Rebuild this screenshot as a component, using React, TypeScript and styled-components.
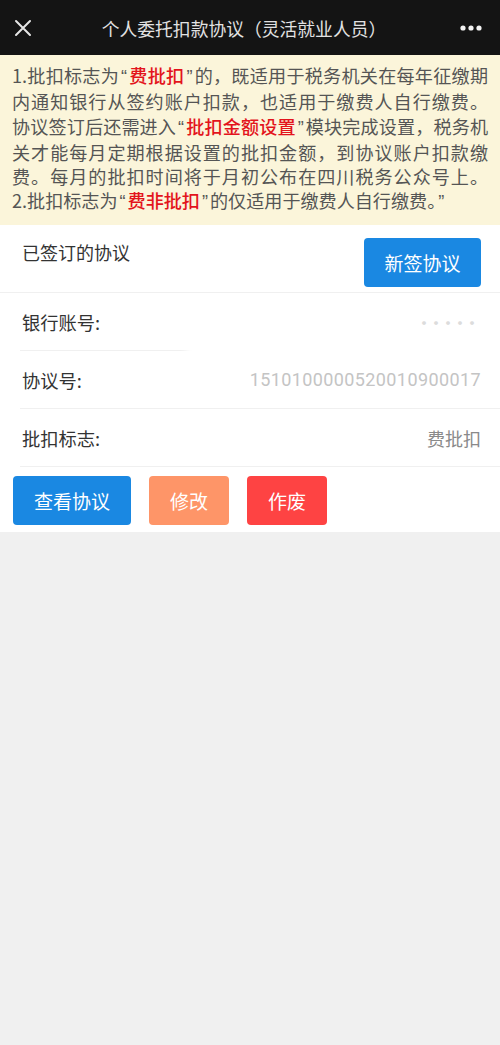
import styled, { createGlobalStyle } from 'styled-components';

const GlobalStyle = createGlobalStyle`
  html, body {
    margin: 0;
    padding: 0;
    background: #f0f0f0;
  }
  body {
    font-family: "Noto Sans CJK SC", "Noto Sans", sans-serif;
  }
`;

// each line of the notice, split into plain / red / quote parts
type Part = { text: string; kind?: 'red' | 'quote' };

const notice: Part[][] = [
  [{ text: '1.批扣标志为' }, { text: '“', kind: 'quote' }, { text: '费批扣', kind: 'red' }, { text: '”', kind: 'quote' }, { text: '的，既适用于税务机关在每年征缴期' }],
  [{ text: '内通知银行从签约账户扣款，也适用于缴费人自行缴费。' }],
  [{ text: '协议签订后还需进入' }, { text: '“', kind: 'quote' }, { text: '批扣金额设置', kind: 'red' }, { text: '”', kind: 'quote' }, { text: '模块完成设置，税务机' }],
  [{ text: '关才能每月定期根据设置的批扣金额，到协议账户扣款缴' }],
  [{ text: '费。每月的批扣时间将于月初公布在四川税务公众号上。' }],
  [{ text: '2.批扣标志为' }, { text: '“', kind: 'quote' }, { text: '费非批扣', kind: 'red' }, { text: '”', kind: 'quote' }, { text: '的仅适用于缴费人自行缴费。' }, { text: '”', kind: 'quote' }],
];

const App = () => {
  return (
    <Page>
      <GlobalStyle />
      <TopBar>
        <BarIcon>
          <svg width="18" height="18" viewBox="0 0 18 18">
            <path d="M2 2 L16 16 M16 2 L2 16" stroke="#e6e6e6" strokeWidth="2" strokeLinecap="round" />
          </svg>
        </BarIcon>
        <Title>个人委托扣款协议（灵活就业人员）</Title>
        <BarIcon>
          <svg width="22" height="6" viewBox="0 0 22 6">
            <circle cx="3" cy="3" r="2.6" fill="#f2f2f2" />
            <circle cx="11" cy="3" r="2.6" fill="#f2f2f2" />
            <circle cx="19" cy="3" r="2.6" fill="#f2f2f2" />
          </svg>
        </BarIcon>
      </TopBar>

      <Notice>
        {notice.map((line, i) => (
          <NoticeLine key={i} $last={i === notice.length - 1}>
            {line.map((part, j) =>
              part.kind === 'red' ? (
                <Red key={j}>{part.text}</Red>
              ) : part.kind === 'quote' ? (
                <Quote key={j}>{part.text}</Quote>
              ) : (
                <span key={j}>{part.text}</span>
              )
            )}
          </NoticeLine>
        ))}
      </Notice>

      <Card>
        <CardHead>
          <HeadTitle>已签订的协议</HeadTitle>
          <Button $color="#1a88e2" $width={117}>新签协议</Button>
        </CardHead>
        <Row>
          <Label>银行账号:</Label>
          <Value $faint>·····</Value>
          <Smudge />
        </Row>
        <Row>
          <Label>协议号:</Label>
          <Value $light>1510100000520010900017</Value>
        </Row>
        <Row>
          <Label>批扣标志:</Label>
          <Value>费批扣</Value>
        </Row>
        <Actions>
          <Button $color="#1a88e2" $width={118}>查看协议</Button>
          <Button $color="#fe9568" $width={80}>修改</Button>
          <Button $color="#fe4343" $width={80}>作废</Button>
        </Actions>
      </Card>
    </Page>
  );
};
export default App;

const Page = styled.div`
  width: 500px;
  min-height: 1045px;
  background: #f0f0f0;
`;

const TopBar = styled.header`
  height: 55px;
  background: #141414;
  display: flex;
  align-items: center;
  justify-content: space-between;
  padding: 0 18px 0 12px;
  box-sizing: border-box;
`;

const BarIcon = styled.div`
  display: flex;
  align-items: center;
  justify-content: center;
  width: 22px;
  height: 22px;
`;

const Title = styled.h1`
  margin: 0 0 0 -6px;
  font-size: 17.8px;
  font-weight: 400;
  color: #e2e2e2;
`;

const Notice = styled.section`
  background: #fbf5da;
  padding: 8px 12px;
  height: 170px;
  box-sizing: border-box;
  color: #555;
  font-size: 18.1px;
  line-height: 24.3px;
`;

const NoticeLine = styled.div<{ $last?: boolean }>`
  white-space: nowrap;
  text-align: justify;
  text-align-last: ${(p) => (p.$last ? 'left' : 'justify')};
`;

const Red = styled.span`
  color: #e3141c;
  font-weight: 500;
`;

const Quote = styled.span`
  font-family: "Liberation Sans", Arial, sans-serif;
  padding: 0 2px;
`;

const Card = styled.section`
  background: #fff;
  padding-bottom: 7px;
`;

const CardHead = styled.div`
  display: flex;
  justify-content: space-between;
  align-items: flex-start;
  padding: 13px 19px 5px 22px;
  border-bottom: 1px solid #f0f0f0;
`;

const HeadTitle = styled.div`
  font-size: 18px;
  color: #333;
  line-height: 28px;
`;

const Row = styled.div`
  position: relative;
  display: flex;
  justify-content: space-between;
  align-items: center;
  height: 57px;
  margin-left: 20px;
  padding: 0 19px 0 2px;
  border-bottom: 1px solid #f0f0f0;
`;

const Label = styled.div`
  font-size: 18.3px;
  color: #333;
`;

const Value = styled.div<{ $light?: boolean; $faint?: boolean }>`
  font-size: 18px;
  color: ${(p) => (p.$faint ? '#dcdcdc' : p.$light ? '#c4c4c4' : '#8a8a8a')};
  font-family: ${(p) => (p.$light ? '"Roboto", "Noto Sans", sans-serif' : 'inherit')};
  letter-spacing: ${(p) => (p.$light ? '0.4px' : p.$faint ? '-6px' : '0')};
  margin-right: ${(p) => (p.$faint ? '6px' : '0')};
`;

const Smudge = styled.div`
  position: absolute;
  left: 166px;
  right: -10px;
  bottom: -6px;
  height: 14px;
  background: #fff;
  filter: blur(3px);
`;

const Actions = styled.div`
  display: flex;
  gap: 18px;
  padding: 9px 13px 0;
`;

const Button = styled.button<{ $color: string; $width: number }>`
  width: ${(p) => p.$width}px;
  height: 49px;
  border: none;
  border-radius: 4px;
  background: ${(p) => p.$color};
  color: #fff;
  font-family: inherit;
  font-size: 19px;
  padding: 0;
`;
